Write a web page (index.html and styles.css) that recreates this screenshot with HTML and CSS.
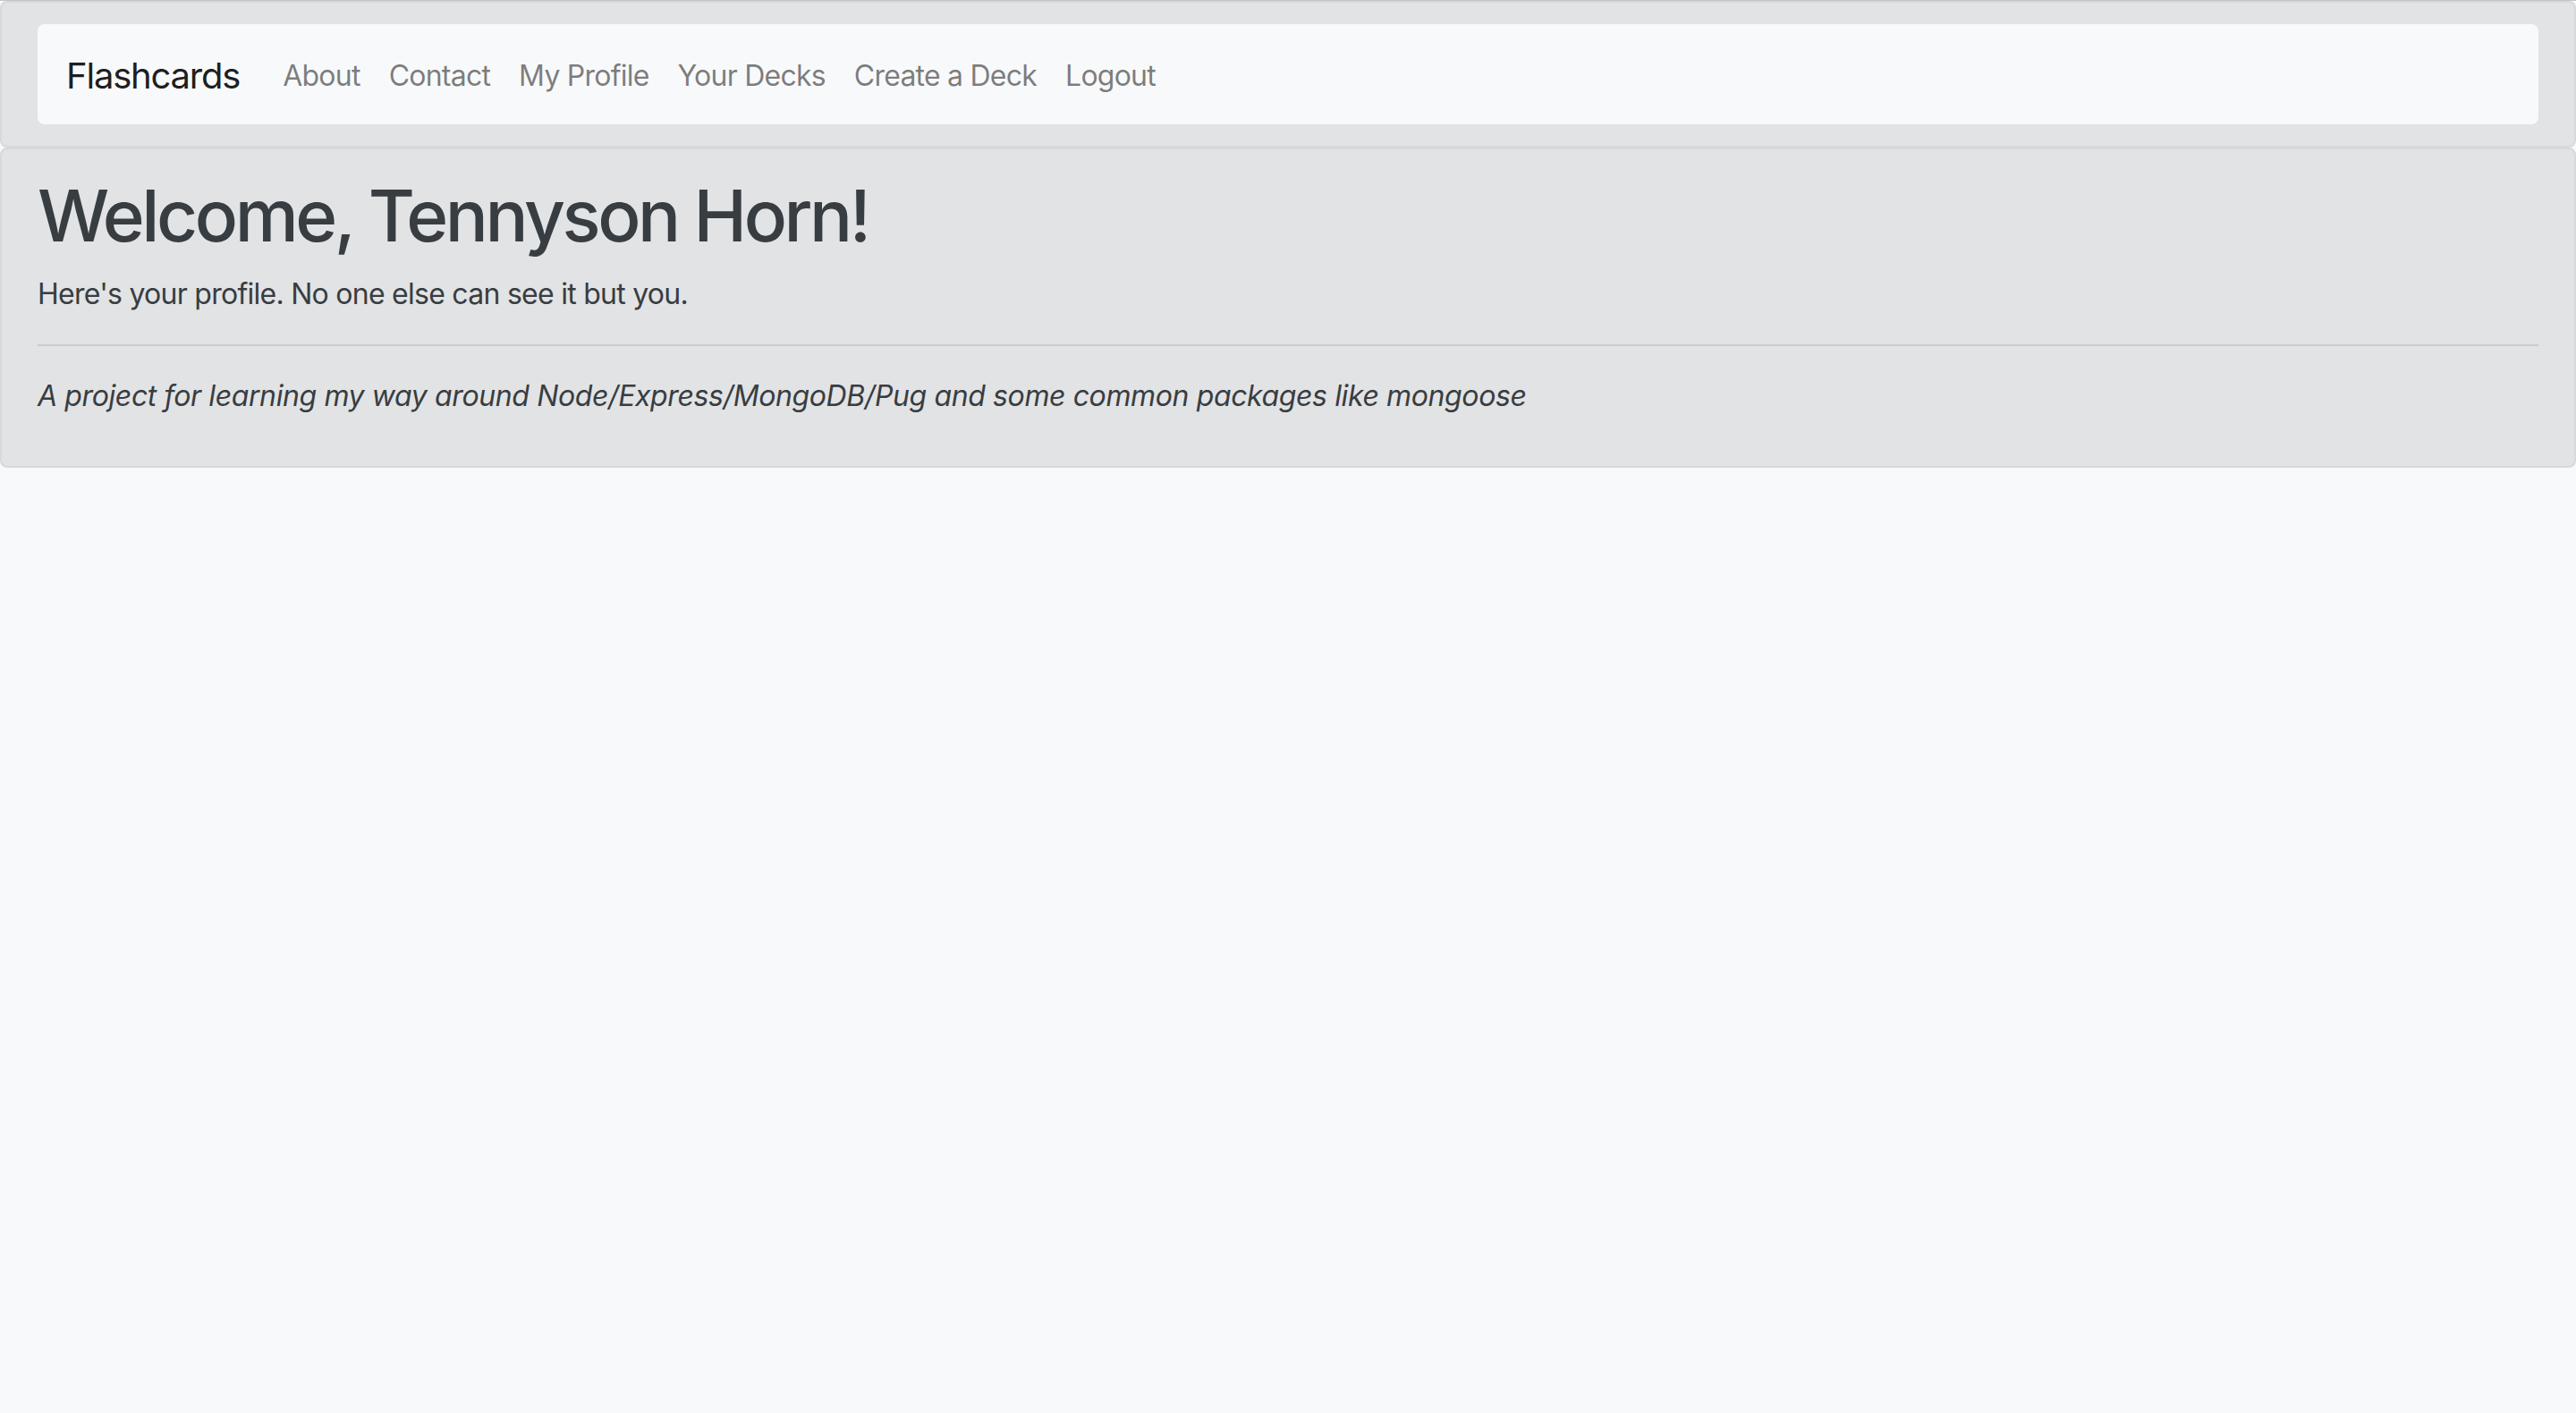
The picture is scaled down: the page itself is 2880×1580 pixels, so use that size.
FILE: index.html
```html
<!DOCTYPE html>
<html lang="en">
<head>
<meta charset="utf-8">
<title>Flashcards</title>
<link rel="stylesheet" href="styles.css">
</head>
<body>
  <div class="panel panel-nav">
    <nav class="navbar">
      <a class="brand" href="#">Flashcards</a>
      <ul class="nav-links">
        <li><a href="#">About</a></li>
        <li><a href="#">Contact</a></li>
        <li><a href="#">My Profile</a></li>
        <li><a href="#">Your Decks</a></li>
        <li><a href="#">Create a Deck</a></li>
        <li><a href="#">Logout</a></li>
      </ul>
    </nav>
  </div>
  <div class="panel panel-main">
    <h1 class="title">Welcome, Tennyson Horn!</h1>
    <p class="intro">Here's your profile. No one else can see it but you.</p>
    <hr class="divider">
    <p class="tagline"><em>A project for learning my way around Node/Express/MongoDB/Pug and some common packages like mongoose</em></p>
  </div>
</body>
</html>
```

FILE: styles.css
```css
html, body {
  margin: 0;
  padding: 0;
}

body {
  background: #f8f9fa;
  border-top: 1px solid #c4c5c7;
  font-family: Inter, "Noto Sans", "Liberation Sans", sans-serif;
  font-size: 32px;
  line-height: 1.5;
  color: #212529;
  min-height: 1579px;
  box-sizing: border-box;
}

.panel {
  background: #e2e3e5;
  border: 2px solid #d6d8db;
  border-radius: 8px;
  padding: 24px 40px;
  color: #383d41;
}

.panel-main {
  padding-top: 26px;
  padding-bottom: 22px;
}

.navbar {
  display: flex;
  align-items: center;
  background: #f8f9fa;
  border-radius: 8px;
  padding: 18px 32px 14px;
}

.brand {
  font-size: 40px;
  line-height: 60px;
  padding: 10px 0;
  margin-right: 32px;
  letter-spacing: -0.03em;
  color: rgba(0, 0, 0, 0.9);
  text-decoration: none;
  white-space: nowrap;
}

.nav-links {
  display: flex;
  list-style: none;
  margin: 0;
  padding: 0;
}

.nav-links a {
  display: block;
  padding: 16px 16px;
  line-height: 48px;
  letter-spacing: -0.024em;
  color: rgba(0, 0, 0, 0.5);
  text-decoration: none;
  white-space: nowrap;
}

.title {
  margin: 0 0 16px;
  font-size: 80px;
  font-weight: 500;
  line-height: 1.2;
  letter-spacing: -0.043em;
  color: #383d41;
}

.intro {
  margin: 0 0 32px;
  letter-spacing: -0.023em;
}

.divider {
  margin: 32px 0;
  border: 0;
  border-top: 2px solid rgba(0, 0, 0, 0.1);
}

.tagline {
  margin: 0 0 32px;
  letter-spacing: -0.012em;
}
```
